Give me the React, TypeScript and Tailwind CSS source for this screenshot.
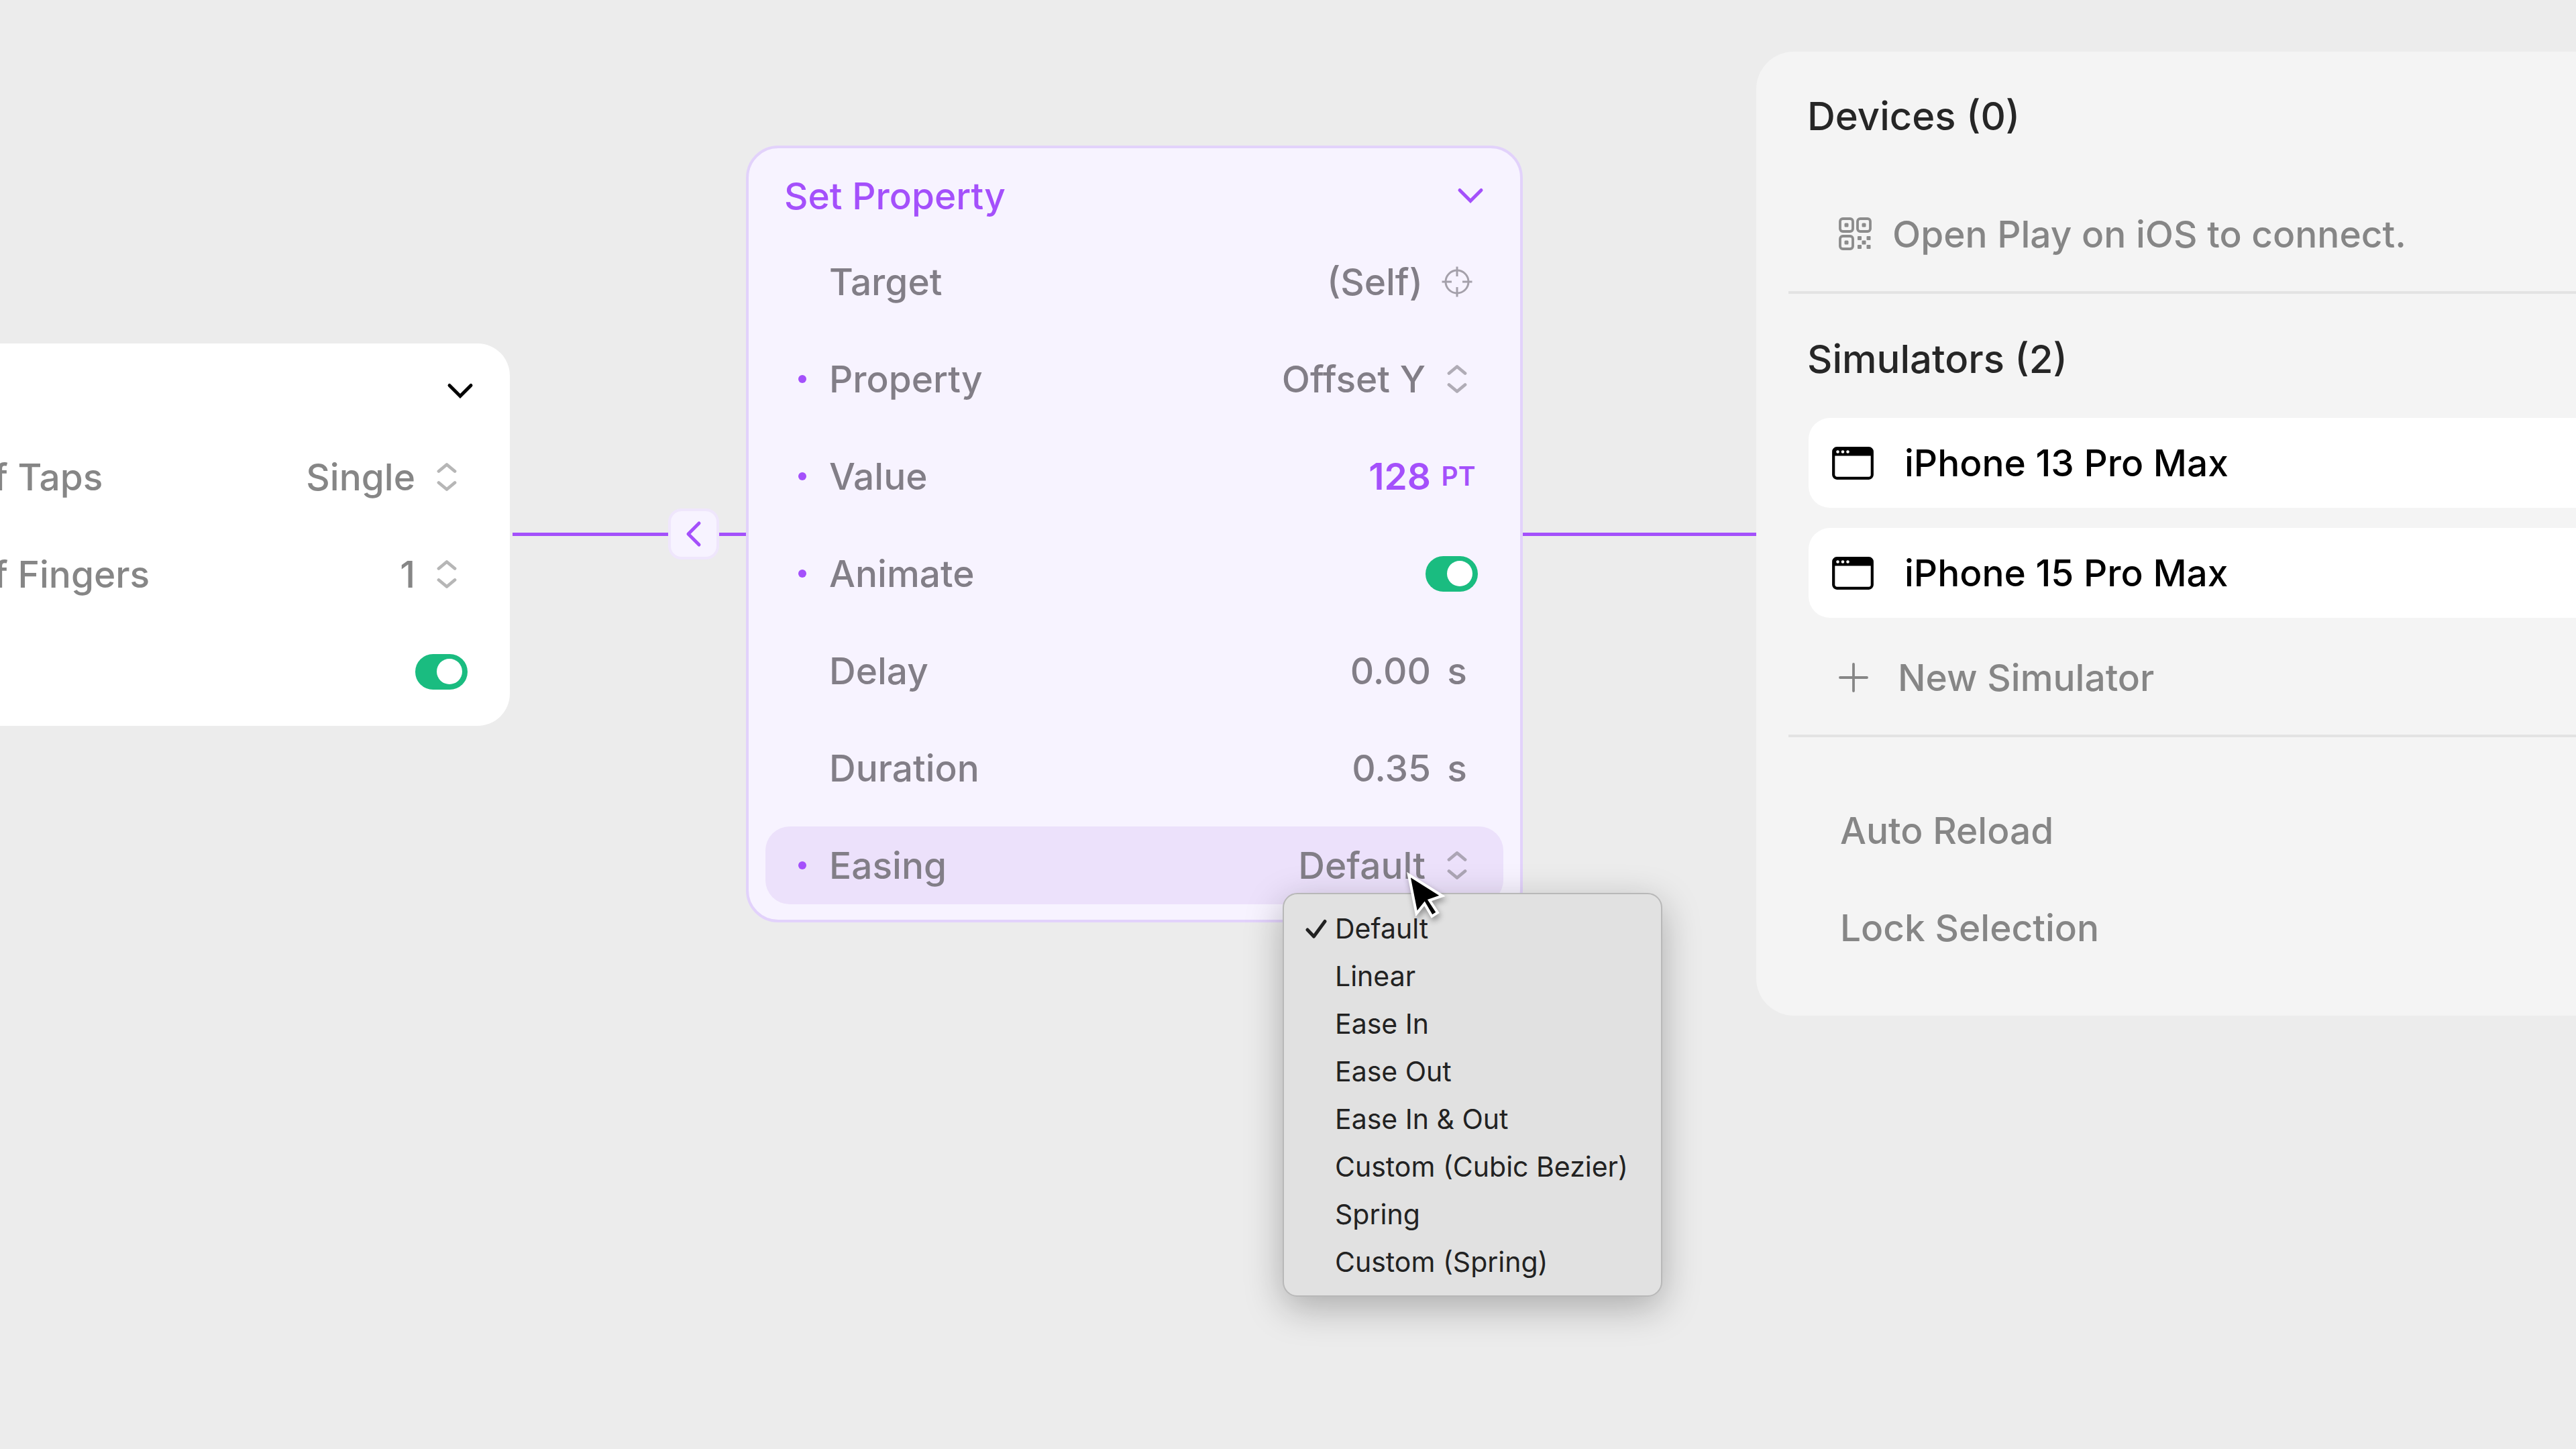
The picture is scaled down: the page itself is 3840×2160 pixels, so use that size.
import React, { useState } from 'react';

const easings = [
  'Default',
  'Linear',
  'Ease In',
  'Ease Out',
  'Ease In & Out',
  'Custom (Cubic Bezier)',
  'Spring',
  'Custom (Spring)',
];

const simulators = ['iPhone 13 Pro Max', 'iPhone 15 Pro Max'];

const ChevronDown = () => (
  <svg viewBox="0 0 40 26" className="w-10" fill="none" stroke="currentColor" strokeWidth="5" strokeLinecap="round">
    <path d="M4 4.5 L20 20.5 L36 4.5" />
  </svg>
);

const Stepper = () => (
  <svg viewBox="0 0 32 44" className="w-8" fill="none" stroke="currentColor" strokeWidth="4.8" strokeLinecap="round" strokeLinejoin="round">
    <path d="M4 13.5 L16 3.5 L28 13.5" />
    <path d="M4 30.5 L16 40.5 L28 30.5" />
  </svg>
);

const Crosshair = () => (
  <svg viewBox="0 0 46 46" className="w-[46px]" fill="none" stroke="currentColor" strokeWidth="3">
    <circle cx="23" cy="23" r="17" />
    <path d="M23 0.5 V15 M23 31 V45.5 M0.5 23 H15 M31 23 H45.5" />
  </svg>
);

const QrCode = () => (
  <svg viewBox="0 0 50 50" className="w-[50px] shrink-0 text-[#8c8c8c]" fill="none" stroke="currentColor" strokeWidth="3.8">
    <rect x="2" y="2" width="19" height="19" rx="4" />
    <rect x="28" y="2" width="19" height="19" rx="4" />
    <rect x="2" y="28" width="19" height="19" rx="4" />
    <g fill="currentColor" stroke="none">
      <rect x="8.5" y="8.5" width="6" height="6" rx="1.5" />
      <rect x="34.5" y="8.5" width="6" height="6" rx="1.5" />
      <rect x="8.5" y="34.5" width="6" height="6" rx="1.5" />
      <rect x="28" y="28" width="6" height="6" rx="1" />
      <rect x="41.5" y="28" width="6" height="6" rx="1" />
      <rect x="34.5" y="34.5" width="6" height="6" rx="1" />
      <rect x="28" y="41" width="6" height="6" rx="1" />
      <rect x="41.5" y="41" width="6" height="6" rx="1" />
    </g>
  </svg>
);

const WindowIcon = () => (
  <svg viewBox="0 0 62 49" className="w-[62px] shrink-0">
    <rect x="2.2" y="2.2" width="57.600" height="44.600" rx="5" fill="none" stroke="black" strokeWidth="4.2" />
    <path d="M1 13.5 V6 a5 5 0 0 1 5 -5 H56 a5 5 0 0 1 5 5 V13.5 Z" fill="black" />
    <g fill="white">
      <circle cx="8.5" cy="7.5" r="2.3" />
      <circle cx="16" cy="7.5" r="2.3" />
      <circle cx="23.5" cy="7.5" r="2.3" />
    </g>
  </svg>
);

type RowProps = {
  id?: string;
  label?: string;
  dot?: boolean;
  active?: boolean;
  children: React.ReactNode;
};

const Row = ({ id, label, dot, active, children }: RowProps) => (
  <div className={`flex h-[116px] items-center rounded-[36px] pl-[49px] pr-[38px] ${active ? 'bg-[#ece1fb]' : ''}`}>
    <span className={`size-3 shrink-0 rounded-full ${dot ? 'bg-[#a450fb]' : ''}`} />
    <label htmlFor={id} className="ml-[34px] whitespace-nowrap">
      {label}
    </label>
    <div className="ml-auto flex items-center">{children}</div>
  </div>
);

type SelectProps = {
  id: string;
  value: string;
  options: string[];
};

const Select = ({ id, value, options }: SelectProps) => (
  <>
    <select id={id} defaultValue={value} className="mr-4 field-sizing-content appearance-none text-right outline-none">
      {options.map((option) => (
        <option key={option}>{option}</option>
      ))}
    </select>
    <span className="flex w-[62px] justify-center opacity-60">
      <Stepper />
    </span>
  </>
);

const Toggle = ({ id, label }: { id: string; label?: string }) => (
  <input
    id={id}
    type="checkbox"
    role="switch"
    aria-label={label}
    defaultChecked
    className="flex h-[53px] w-[78px] appearance-none items-center rounded-full bg-[#aaaaaa] px-2 before:size-[38px] before:rounded-full before:bg-white checked:justify-end checked:bg-[#1abc80]"
  />
);

const Seconds = ({ id, value }: { id: string; value: string }) => (
  <>
    <input id={id} type="text" defaultValue={value} className="mr-2 w-40 bg-transparent text-right outline-none" />
    <span className="w-[62px] text-center">s</span>
  </>
);

const TapNode = () => (
  <section className="absolute right-[1858px] top-[512px] w-[1148px] rounded-[48px] bg-white pb-[23px] text-[#868686]">
    <header className="flex h-[141px] items-center justify-end pr-[54px] text-black">
      <button aria-label="Collapse">
        <ChevronDown />
      </button>
    </header>
    <div className="flex flex-col gap-[29px] px-[25px]">
      <Row id="taps" label="Number of Taps">
        <Select id="taps" value="Single" options={['Single', 'Double']} />
      </Row>
      <Row id="fingers" label="Number of Fingers">
        <Select id="fingers" value="1" options={['1', '2', '3']} />
      </Row>
      <Row>
        <Toggle id="enabled" label="Enabled" />
      </Row>
    </div>
  </section>
);

const SetPropertyNode = ({ easing }: { easing: string }) => (
  <section className="absolute left-[1112px] top-[217px] w-[1158px] rounded-[48px] border-4 border-[#e2d2fb] bg-[#f7f3ff] pb-[23px] text-[#827e87]">
    <header className="flex h-[141px] items-center justify-between pl-[53px] pr-[54px] text-[#a450fb]">
      <h2>Set Property</h2>
      <button aria-label="Collapse">
        <ChevronDown />
      </button>
    </header>
    <div className="flex flex-col gap-[29px] px-[25px]">
      <Row id="target" label="Target">
        <span className="mr-5">(Self)</span>
        <button id="target" className="flex w-[62px] justify-center opacity-70">
          <Crosshair />
        </button>
      </Row>
      <Row id="property" label="Property" dot>
        <Select id="property" value="Offset Y" options={['Offset X', 'Offset Y']} />
      </Row>
      <Row id="value" label="Value" dot>
        <input
          id="value"
          type="text"
          defaultValue="128"
          className="mr-3 w-40 bg-transparent text-right font-semibold text-[#a450fb] outline-none"
        />
        <span className="w-[58px] text-center text-[39px] font-semibold text-[#a450fb]">PT</span>
      </Row>
      <Row id="animate" label="Animate" dot>
        <Toggle id="animate" />
      </Row>
      <Row id="delay" label="Delay">
        <Seconds id="delay" value="0.00" />
      </Row>
      <Row id="duration" label="Duration">
        <Seconds id="duration" value="0.35" />
      </Row>
      <Row id="easing" label="Easing" dot active>
        <Select key={easing} id="easing" value={easing} options={easings} />
      </Row>
    </div>
  </section>
);

type MenuProps = {
  selected: string;
  onSelect: (easing: string) => void;
};

const EasingMenu = ({ selected, onSelect }: MenuProps) => (
  <ul
    role="listbox"
    aria-label="Easing"
    className="absolute left-[1912px] top-[1331px] rounded-[22px] border-2 border-[#b8b8b8] bg-[#e1e1e1] pt-4 pb-[14px] pl-8 pr-[49px] text-[41px] leading-[71px] font-normal text-[#222222] shadow-[0_16px_56px_rgba(0,0,0,0.28)]"
  >
    {easings.map((easing) => (
      <li key={easing} role="option" aria-selected={easing === selected}>
        <button className="flex items-center whitespace-nowrap" onClick={() => onSelect(easing)}>
          <span className="w-11">
            {easing === selected && (
              <svg viewBox="0 0 32 30" className="w-8" fill="none" stroke="currentColor" strokeWidth="5" strokeLinecap="round" strokeLinejoin="round">
                <path d="M3 16 L12.5 26 L29 3.5" />
              </svg>
            )}
          </span>
          {easing}
        </button>
      </li>
    ))}
  </ul>
);

const Cursor = () => (
  <svg
    viewBox="0 0 58 70"
    className="pointer-events-none absolute left-[2097px] top-[1300px] w-[58px] drop-shadow-[2px_5px_4px_rgba(0,0,0,0.35)]"
  >
    <path
      d="M3 4 L14.5 62 L26.5 47 L37.5 66 L46 60.5 L34 42 L53 35.5 Z"
      fill="black"
      stroke="white"
      strokeWidth="4"
    />
  </svg>
);

const DevicesPanel = () => (
  <aside className="mt-[77px] w-[1222px] shrink-0 self-start rounded-l-[56px] bg-[#f4f4f4] pb-[73px] text-[#868686]">
    <h2 className="mt-[38px] flex h-[116px] items-center pl-[76px] text-[58px] text-[#262626]">Devices (0)</h2>
    <p className="mt-[60px] flex h-[116px] items-center gap-[30px] pl-[123px]">
      <QrCode />
      Open Play on iOS to connect.
    </p>
    <hr className="ml-12 mt-[27px] border-t-4 border-[#e3e3e3]" />
    <h2 className="mt-[39px] flex h-[116px] items-center pl-[76px] text-[58px] text-[#262626]">Simulators (2)</h2>
    <ul className="mt-[30px] flex flex-col gap-[30px] pl-[78px]">
      {simulators.map((simulator) => (
        <li key={simulator}>
          <button className="flex h-[134px] w-full items-center gap-[46px] rounded-l-[32px] bg-white pl-[35px] text-black">
            <WindowIcon />
            {simulator}
          </button>
        </li>
      ))}
    </ul>
    <button className="mt-[31px] flex h-[116px] items-center gap-[44px] pl-[123px]">
      <svg viewBox="0 0 44 44" className="w-11" fill="none" stroke="currentColor" strokeWidth="3.8" strokeLinecap="round">
        <path d="M22 2 V42 M2 22 H42" />
      </svg>
      New Simulator
    </button>
    <hr className="ml-12 mt-[27px] border-t-4 border-[#e3e3e3]" />
    <div className="mt-[81px] flex flex-col gap-[29px] pl-[125px]">
      <button className="h-[116px] text-left">Auto Reload</button>
      <button className="h-[116px] text-left">Lock Selection</button>
    </div>
  </aside>
);

const App: React.FC = () => {
  const [easing, setEasing] = useState('Default');

  return (
    <div className="flex min-h-screen overflow-hidden bg-[#ececec] font-['Inter',sans-serif] text-[55px] leading-[72px] font-medium">
      <main className="relative flex-1">
        {/* Connectors */}
        <div className="absolute left-[764px] right-0 top-[794px] h-[5px] bg-[#a450fb]" />
        <button
          aria-label="Previous"
          className="absolute left-[996px] top-[758px] flex h-[76px] w-[76px] items-center justify-center rounded-[20px] border-4 border-[#efe6fc] bg-[#f7f3ff] text-[#a450fb]"
        >
          <svg viewBox="0 0 24 40" className="w-6" fill="none" stroke="currentColor" strokeWidth="5" strokeLinecap="round" strokeLinejoin="round">
            <path d="M20 4 L4 20 L20 36" />
          </svg>
        </button>
        <TapNode />
        <SetPropertyNode easing={easing} />
        <EasingMenu selected={easing} onSelect={setEasing} />
        <Cursor />
      </main>
      <DevicesPanel />
    </div>
  );
};

export default App;
